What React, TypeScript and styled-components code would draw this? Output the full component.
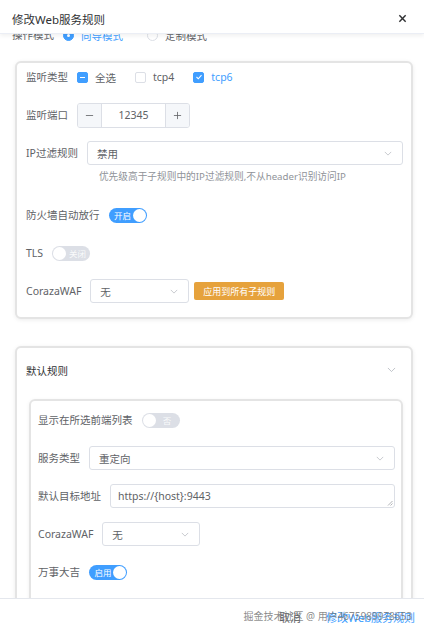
import { useLayoutEffect, useRef, ReactNode } from 'react'
import styled, { createGlobalStyle } from 'styled-components'

const Colors = {
  TEXT: '#606266',
  TITLE: '#303133',
  HINT: '#909399',
  BORDER: '#dcdfe6',
  PRIMARY: '#409eff',
  WARNING: '#e6a23c',
  FILL: '#f5f7fa',
}

const GlobalStyle = createGlobalStyle`
  html, body {
    margin: 0;
    padding: 0;
    height: 100%;
    background: #fff;
  }
  body {
    font-family: "Noto Sans", "Noto Sans CJK SC", sans-serif;
    color: ${Colors.TEXT};
  }
  * { box-sizing: border-box; }
`

function Chevron({ size = 8 }: { size?: number }) {
  return (
    <svg width={size} height={size / 2 + 1} viewBox="0 0 10 6" fill="none">
      <polyline points="1,1 5,5 9,1" stroke="#b4b7bd" strokeWidth="0.9" />
    </svg>
  )
}

function Checkbox({ state, label }: { state: 'on' | 'off' | 'mixed'; label: string }) {
  return (
    <CheckItem>
      <CheckBox $active={state !== 'off'}>
        {state === 'on' && (
          <svg width="8" height="8" viewBox="0 0 8 8" fill="none">
            <polyline points="1.5,4 3.3,5.8 6.5,2.2" stroke="#fff" strokeWidth="1.1" />
          </svg>
        )}
        {state === 'mixed' && <MixedBar />}
      </CheckBox>
      <CheckLabel $active={state === 'on'}>{label}</CheckLabel>
    </CheckItem>
  )
}

function Radio({ checked, label }: { checked: boolean; label: string }) {
  return (
    <RadioItem>
      <RadioDot $checked={checked} />
      <CheckLabel $active={checked}>{label}</CheckLabel>
    </RadioItem>
  )
}

function Switch({ on, text }: { on: boolean; text: string }) {
  return (
    <SwitchTrack $on={on}>
      {on ? (
        <>
          <SwitchText>{text}</SwitchText>
          <SwitchKnob />
        </>
      ) : (
        <>
          <SwitchKnob />
          <SwitchText $faded>{text}</SwitchText>
        </>
      )}
    </SwitchTrack>
  )
}

function Select({ value, width }: { value: string; width?: number }) {
  return (
    <SelectBox $width={width}>
      <span>{value}</span>
      <Chevron />
    </SelectBox>
  )
}

function Field({ label, children }: { label: string; children: ReactNode }) {
  return (
    <FieldRow>
      <FieldLabel>{label}</FieldLabel>
      <FieldContent>{children}</FieldContent>
    </FieldRow>
  )
}

export default function App() {
  const bodyRef = useRef<HTMLDivElement>(null)

  // the dialog body is shown scrolled down a little
  useLayoutEffect(() => {
    if (bodyRef.current) bodyRef.current.scrollTop = 23
  }, [])

  return (
    <>
      <GlobalStyle />
      <Dialog>
        <Header>
          <Title>修改Web服务规则</Title>
          <svg width="9" height="9" viewBox="0 0 10 10">
            <path d="M1.5 1.5 L8.5 8.5 M8.5 1.5 L1.5 8.5" stroke={Colors.TITLE} strokeWidth="1.6" />
          </svg>
        </Header>

        <Body ref={bodyRef}>
          <ModeRow>
            <FieldLabel>操作模式</FieldLabel>
            <Radio checked label="向导模式" />
            <Radio checked={false} label="定制模式" />
          </ModeRow>

          <Card>
            <Field label="监听类型">
              <Checkbox state="mixed" label="全选" />
              <Checkbox state="off" label="tcp4" />
              <Checkbox state="on" label="tcp6" />
            </Field>
            <Field label="监听端口">
              <NumberInput>
                <StepButton>
                  <svg width="9" height="9" viewBox="0 0 10 10">
                    <path d="M1 5 H9" stroke={Colors.TEXT} strokeWidth="0.9" />
                  </svg>
                </StepButton>
                <NumberValue>12345</NumberValue>
                <StepButton $right>
                  <svg width="9" height="9" viewBox="0 0 10 10">
                    <path d="M1 5 H9 M5 1 V9" stroke={Colors.TEXT} strokeWidth="0.9" />
                  </svg>
                </StepButton>
              </NumberInput>
            </Field>
            <FieldRow>
              <FieldLabel>IP过滤规则</FieldLabel>
              <FieldColumn>
                <Select value="禁用" />
                <Hint>优先级高于子规则中的IP过滤规则,不从header识别访问IP</Hint>
              </FieldColumn>
            </FieldRow>
            <Field label="防火墙自动放行">
              <Switch on text="开启" />
            </Field>
            <Field label="TLS">
              <Switch on={false} text="关闭" />
            </Field>
            <Field label="CorazaWAF">
              <Select value="无" width={99} />
              <WarnButton>应用到所有子规则</WarnButton>
            </Field>
          </Card>

          <Card $spaced>
            <CollapseHeader>
              <span>默认规则</span>
              <Chevron size={9} />
            </CollapseHeader>
            <InnerCard>
              <Field label="显示在所选前端列表">
                <Switch on={false} text="否" />
              </Field>
              <Field label="服务类型">
                <Select value="重定向" />
              </Field>
              <Field label="默认目标地址">
                <TextArea>
                  https://{'{host}'}:9443
                  <Grip width="6" height="6" viewBox="0 0 6 6">
                    <path d="M5.5 1 L1 5.5 M5.5 3.5 L3.5 5.5" stroke="#909399" strokeWidth="0.7" />
                  </Grip>
                </TextArea>
              </Field>
              <Field label="CorazaWAF">
                <Select value="无" width={98} />
              </Field>
              <Field label="万事大吉">
                <Switch on text="启用" />
              </Field>
            </InnerCard>
          </Card>
        </Body>

        <Footer>
          <TextButton>取消</TextButton>
          <TextButton $primary>修改Web服务规则</TextButton>
          <Watermark>掘金技术社区 @ 用户4675989978653</Watermark>
        </Footer>
      </Dialog>
    </>
  )
}

const Dialog = styled.div`
  height: 100vh;
  display: flex;
  flex-direction: column;
  background: #fff;
`

const Header = styled.div`
  flex: none;
  height: 34px;
  display: flex;
  align-items: center;
  justify-content: space-between;
  padding: 4px 17px 0 12px;
  border-bottom: 1px solid #ebeef5;
  box-shadow: 0 2px 4px rgba(0, 0, 0, 0.06);
  position: relative;
  z-index: 2;
  background: #fff;
`

const Title = styled.div`
  font-size: 11.5px;
  color: ${Colors.TITLE};
`

const Body = styled.div`
  flex: 1;
  overflow-y: auto;
  padding: 12px 11px 40px 12px;
  scrollbar-width: none;
  &::-webkit-scrollbar {
    display: none;
  }
`

const ModeRow = styled.div`
  height: 24px;
  display: flex;
  align-items: center;
  margin-bottom: 14px;
  font-size: 10.5px;
`

const Card = styled.div<{ $spaced?: boolean }>`
  margin: ${(p) => (p.$spaced ? '27px 0 0 3px' : '0 0 0 3px')};
  border: 2px solid #e4e4e4;
  border-radius: 6px;
  box-shadow: 0 1px 4px rgba(0, 0, 0, 0.08);
  padding: 2px 8px ${(p) => (p.$spaced ? '12px' : '0')} 9px;
  background: #fff;
`

const InnerCard = styled.div`
  margin-left: 3px;
  border: 2px solid #e4e4e4;
  border-radius: 6px;
  box-shadow: 0 1px 4px rgba(0, 0, 0, 0.06);
  padding: 7px 6px 20px 7px;
`

const CollapseHeader = styled.div`
  height: 40px;
  display: flex;
  align-items: center;
  justify-content: space-between;
  padding-right: 7px;
  margin-bottom: 9px;
  font-size: 10.5px;
  color: ${Colors.TITLE};
`

const FieldRow = styled.div`
  display: flex;
  align-items: flex-start;
  margin-bottom: 14px;
`

const FieldLabel = styled.div`
  flex: none;
  height: 24px;
  line-height: 24px;
  padding-right: 9px;
  font-size: 10.5px;
  color: ${Colors.TEXT};
  white-space: nowrap;
`

const FieldContent = styled.div`
  flex: 1;
  min-width: 0;
  height: 24px;
  display: flex;
  align-items: center;
  gap: 5px;
`

const FieldColumn = styled.div`
  flex: 1;
  min-width: 0;
  display: flex;
  flex-direction: column;
`

const Hint = styled.div`
  height: 24px;
  line-height: 24px;
  padding-left: 12px;
  font-size: 9.7px;
  color: ${Colors.HINT};
  white-space: nowrap;
`

const CheckItem = styled.div`
  display: flex;
  align-items: center;
  gap: 7px;
  margin-right: 14px;
`

const RadioItem = styled.div`
  display: flex;
  align-items: center;
  gap: 7px;
  margin-right: 24px;
`

const CheckBox = styled.span<{ $active: boolean }>`
  width: 11px;
  height: 11px;
  border-radius: 2px;
  display: flex;
  align-items: center;
  justify-content: center;
  background: ${(p) => (p.$active ? Colors.PRIMARY : '#fff')};
  border: 1px solid ${(p) => (p.$active ? Colors.PRIMARY : Colors.BORDER)};
`

const MixedBar = styled.span`
  width: 5px;
  height: 1px;
  background: #fff;
`

const RadioDot = styled.span<{ $checked: boolean }>`
  width: 11px;
  height: 11px;
  border-radius: 50%;
  background: ${(p) => (p.$checked ? Colors.PRIMARY : '#fff')};
  border: 1px solid ${(p) => (p.$checked ? Colors.PRIMARY : Colors.BORDER)};
  display: flex;
  align-items: center;
  justify-content: center;
  &::after {
    content: '';
    width: 3px;
    height: 3px;
    border-radius: 50%;
    background: #fff;
  }
`

const CheckLabel = styled.span<{ $active: boolean }>`
  font-size: 10.5px;
  color: ${(p) => (p.$active ? Colors.PRIMARY : Colors.TEXT)};
`

const NumberInput = styled.div`
  width: 113px;
  height: 25px;
  display: flex;
  border: 1px solid ${Colors.BORDER};
  border-radius: 3px;
  overflow: hidden;
`

const StepButton = styled.div<{ $right?: boolean }>`
  width: 24px;
  display: flex;
  align-items: center;
  justify-content: center;
  background: ${Colors.FILL};
  ${(p) =>
    p.$right
      ? `border-left: 1px solid ${Colors.BORDER};`
      : `border-right: 1px solid ${Colors.BORDER};`}
`

const NumberValue = styled.div`
  flex: 1;
  display: flex;
  align-items: center;
  justify-content: center;
  font-size: 10.5px;
  color: ${Colors.TEXT};
`

const SelectBox = styled.div<{ $width?: number }>`
  flex: ${(p) => (p.$width ? 'none' : '1 1 auto')};
  width: ${(p) => (p.$width ? `${p.$width}px` : 'auto')};
  height: 24px;
  display: flex;
  align-items: center;
  justify-content: space-between;
  padding: 0 10px 0 9px;
  border: 1px solid ${Colors.BORDER};
  border-radius: 3px;
  font-size: 10.5px;
  color: ${Colors.TEXT};
`

const TextArea = styled.div`
  flex: 1 1 auto;
  height: 24px;
  position: relative;
  display: flex;
  align-items: center;
  padding: 0 7px;
  border: 1px solid ${Colors.BORDER};
  border-radius: 3px;
  font-size: 10.5px;
  color: ${Colors.TEXT};
`

const Grip = styled.svg`
  position: absolute;
  right: 1px;
  bottom: 1px;
`

const SwitchTrack = styled.div<{ $on: boolean }>`
  width: 38px;
  height: 15px;
  border-radius: 8px;
  display: flex;
  align-items: center;
  justify-content: space-between;
  padding: 0 1px 0 ${(p) => (p.$on ? '4px' : '1px')};
  background: ${(p) => (p.$on ? Colors.PRIMARY : Colors.BORDER)};
`

const SwitchKnob = styled.span`
  width: 13px;
  height: 13px;
  border-radius: 50%;
  background: #fff;
`

const SwitchText = styled.span<{ $faded?: boolean }>`
  flex: 1;
  text-align: center;
  font-size: 8.5px;
  line-height: 15px;
  color: ${(p) => (p.$faded ? 'rgba(255,255,255,0.85)' : '#fff')};
`

const WarnButton = styled.div`
  flex: none;
  height: 18px;
  padding: 0 9px;
  display: flex;
  align-items: center;
  background: ${Colors.WARNING};
  border-radius: 2px;
  font-size: 9px;
  color: #fff;
`

const Footer = styled.div`
  flex: none;
  height: 36px;
  position: relative;
  display: flex;
  align-items: center;
  justify-content: flex-end;
  gap: 25px;
  padding: 0 9px 0 0;
  border-top: 1px solid #e4e7ed;
  background: #fff;
`

const TextButton = styled.span<{ $primary?: boolean }>`
  font-size: 11px;
  color: ${(p) => (p.$primary ? Colors.PRIMARY : Colors.TEXT)};
`

const Watermark = styled.div`
  position: absolute;
  right: 12px;
  top: 9px;
  font-size: 10px;
  color: rgba(110, 110, 110, 0.8);
  white-space: nowrap;
  pointer-events: none;
`
